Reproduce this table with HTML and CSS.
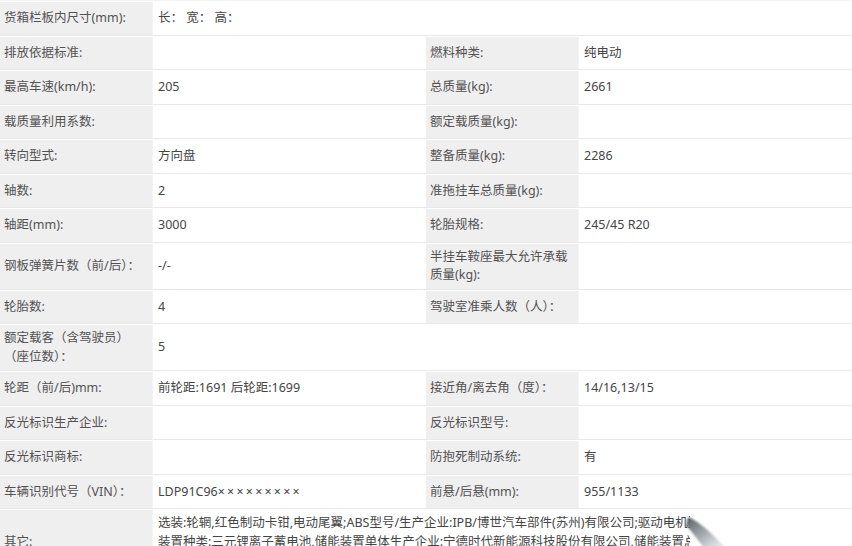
FILE: index.html
```html
<!DOCTYPE html>
<html lang="zh-CN">
<head>
<meta charset="utf-8">
<title>车辆参数</title>
<link rel="stylesheet" href="styles.css">
</head>
<body>
<div class="page">
<table class="spec">
  <colgroup>
    <col class="c-label"><col class="c-value"><col class="c-label"><col class="c-value">
  </colgroup>
  <tbody>
    <tr><td class="lb">货箱栏板内尺寸(mm):</td><td class="vl" colspan="3">长：&nbsp;宽：&nbsp;高：</td></tr>
    <tr><td class="lb">排放依据标准:</td><td class="vl"></td><td class="lb">燃料种类:</td><td class="vl">纯电动</td></tr>
    <tr><td class="lb">最高车速(km/h):</td><td class="vl">205</td><td class="lb">总质量(kg):</td><td class="vl">2661</td></tr>
    <tr><td class="lb">载质量利用系数:</td><td class="vl"></td><td class="lb">额定载质量(kg):</td><td class="vl"></td></tr>
    <tr><td class="lb">转向型式:</td><td class="vl">方向盘</td><td class="lb">整备质量(kg):</td><td class="vl">2286</td></tr>
    <tr><td class="lb">轴数:</td><td class="vl">2</td><td class="lb">准拖挂车总质量(kg):</td><td class="vl"></td></tr>
    <tr><td class="lb">轴距(mm):</td><td class="vl">3000</td><td class="lb">轮胎规格:</td><td class="vl">245/45 R20</td></tr>
    <tr><td class="lb">钢板弹簧片数（前/后）：</td><td class="vl">-/-</td><td class="lb">半挂车鞍座最大允许承载质量(kg):</td><td class="vl"></td></tr>
    <tr><td class="lb">轮胎数:</td><td class="vl">4</td><td class="lb">驾驶室准乘人数（人）：</td><td class="vl"></td></tr>
    <tr><td class="lb">额定载客（含驾驶员）（座位数）：</td><td class="vl" colspan="3">5</td></tr>
    <tr><td class="lb">轮距（前/后)mm:</td><td class="vl">前轮距:1691 后轮距:1699</td><td class="lb">接近角/离去角（度）：</td><td class="vl">14/16,13/15</td></tr>
    <tr><td class="lb">反光标识生产企业:</td><td class="vl"></td><td class="lb">反光标识型号:</td><td class="vl"></td></tr>
    <tr><td class="lb">反光标识商标:</td><td class="vl"></td><td class="lb">防抱死制动系统:</td><td class="vl">有</td></tr>
    <tr><td class="lb">车辆识别代号（VIN）：</td><td class="vl">LDP91C96<span class="mask">×××××××××</span></td><td class="lb">前悬/后悬(mm):</td><td class="vl">955/1133</td></tr>
    <tr><td class="lb">其它:</td><td class="vl" colspan="3"><span class="line">选装:轮辋,红色制动卡钳,电动尾翼;ABS型号/生产企业:IPB/博世汽车部件(苏州)有限公司;驱动电机型号:TZ200XSE;储能</span><span class="line">装置种类:三元锂离子蓄电池,储能装置单体生产企业:宁德时代新能源科技股份有限公司,储能装置总成生产企业:宁德时代</span><span class="line">新能源科技股份有限公司;电动机型号/生产企业:TZ200XSE/弗迪动力有限公司</span></td></tr>
  </tbody>
</table>
<svg class="mark" width="60" height="36" viewBox="0 0 60 36" aria-hidden="true">
  <defs>
    <filter id="blur" x="-30%" y="-30%" width="160%" height="160%"><feGaussianBlur stdDeviation="1.2"/></filter>
    <linearGradient id="g" x1="0" y1="0" x2="1" y2="1">
      <stop offset="0" stop-color="#4a5058" stop-opacity="0.95"/>
      <stop offset="0.55" stop-color="#9aa0a6" stop-opacity="0.8"/>
      <stop offset="1" stop-color="#d6d9dc" stop-opacity="0.4"/>
    </linearGradient>
  </defs>
  <path d="M10 5 C 18 8, 28 16, 38 26 L 48 36 L 26 36 C 20 28, 14 20, 8 13 Z" fill="url(#g)" filter="url(#blur)"/>
</svg>
</div>
</body>
</html>
```

FILE: styles.css
```css
html, body {
  margin: 0;
  padding: 0;
  background: #ffffff;
}
body {
  width: 852px;
  height: 546px;
  overflow: hidden;
  font-family: "Noto Sans", "Noto Sans CJK SC", sans-serif;
  font-size: 12.5px;
  color: #444;
}
.page {
  position: relative;
  width: 852px;
  height: 546px;
  overflow: hidden;
}
.spec {
  width: 850px;
  table-layout: fixed;
  border-collapse: separate;
  border-spacing: 0;
  border-top: 2px solid #f3f3f3;
  border-right: 1px solid #e6e6e6;
  margin-top: -1px;
}
.c-label { width: 152px; }
.c-value { width: 274px; }
.spec td {
  height: 24.5px;
  padding: 4px 4px 4px 4px;
  line-height: 18.5px;
  vertical-align: middle;
  border-top: 1px solid #ffffff;
  border-bottom: 1px solid #e8e8e8;
}
.spec td.lb {
  background: #efefef;
  color: #525252;
  padding-right: 10px;
}
.spec td.vl {
  background: #ffffff;
  color: #454545;
  padding-left: 5px;
  border-left: 1px solid #f4f4f4;
}
.mask {
  letter-spacing: 2.2px;
}
.line {
  display: block;
  width: 532px;
  white-space: nowrap;
  overflow: hidden;
}
.mark {
  position: absolute;
  left: 678px;
  top: 512px;
}
```
